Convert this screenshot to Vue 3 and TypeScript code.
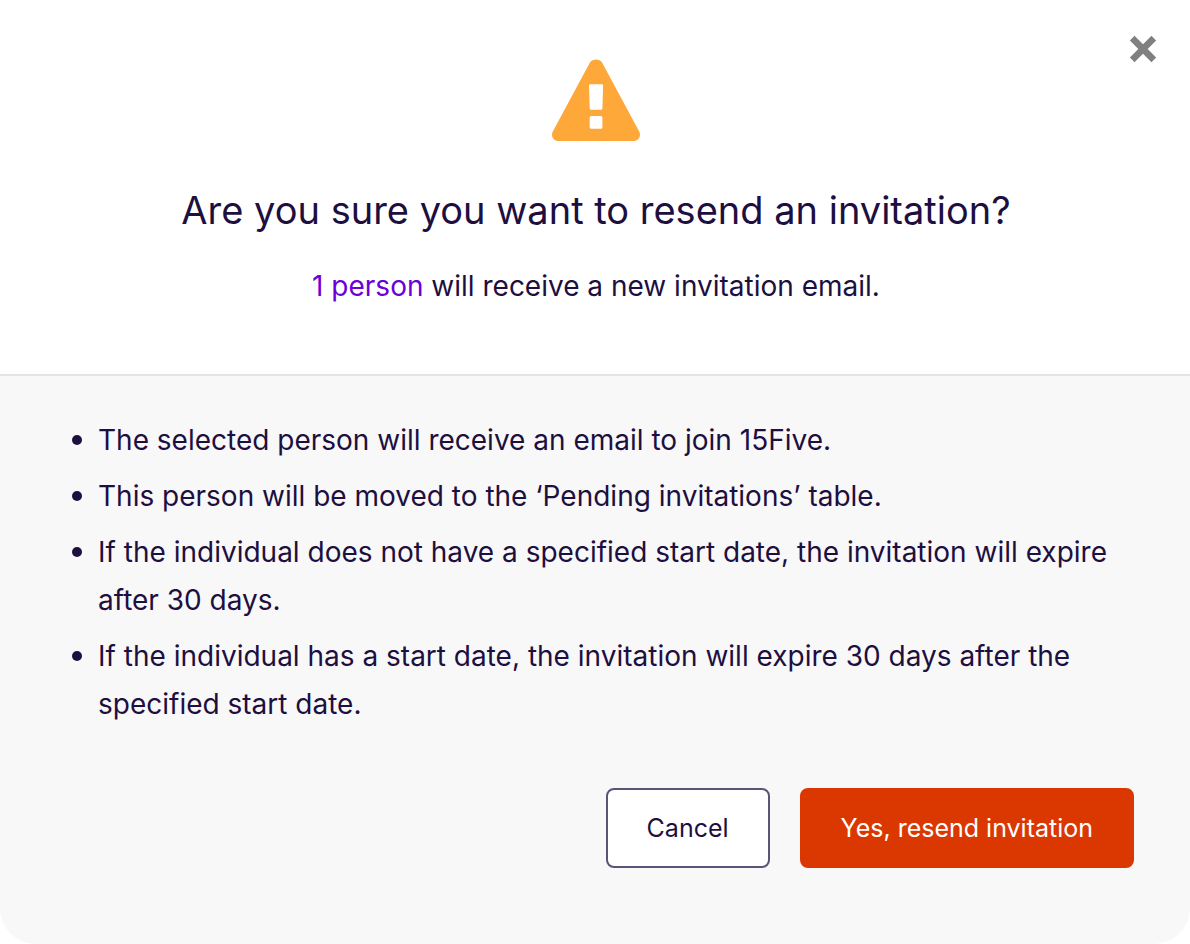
<script setup lang="ts">
import { ref } from 'vue'

const open = ref(true)
const count = ref('1 person')
const notes: string[] = [
  'The selected person will receive an email to join 15Five.',
  'This person will be moved to the ‘Pending invitations’ table.',
  'If the individual does not have a specified start date, the invitation will expire after 30 days.',
  'If the individual has a start date, the invitation will expire 30 days after the specified start date.',
]

function close(): void {
  open.value = false
}
</script>

<template>
  <section v-if="open" class="dialog" role="dialog" aria-modal="true" aria-labelledby="dialog-title">
    <header class="head">
      <button class="close" type="button" aria-label="Close" @click="close">
        <svg viewBox="0 0 28 28" width="28" height="28" aria-hidden="true">
          <path d="M3.2 3.2 24.8 24.8M24.8 3.2 3.2 24.8" fill="none" stroke="#808080" stroke-width="6.6" />
        </svg>
      </button>
      <svg class="warning" viewBox="0 0 88 82" width="88" height="82" aria-hidden="true">
        <path
          fill="#ffa83a"
          fill-rule="evenodd"
          d="M37.8 3.8C40.4-.6 47.6-.6 50.2 3.8L87.2 72.5C89.5 77 86.5 82 81.3 82H6.7C1.5 82-1.5 77 .8 72.5ZM38.3 25.2Q37 25.2 37 26.5L37.7 49.4Q37.8 50.7 39.1 50.7H49Q50.3 50.7 50.4 49.4L51.1 26.5Q51.1 25.2 49.8 25.2ZM39.2 57Q37.7 57 37.7 58.5V68.3Q37.7 69.8 39.2 69.8H48.9Q50.4 69.8 50.4 68.3V58.5Q50.4 57 48.9 57Z"
        />
      </svg>
      <h1 id="dialog-title" class="title">Are you sure you want to resend an invitation?</h1>
      <p class="summary"><span class="count">{{ count }}</span> will receive a new invitation email.</p>
    </header>
    <div class="body">
      <ul class="notes">
        <li v-for="note in notes" :key="note">{{ note }}</li>
      </ul>
      <div class="actions">
        <button class="btn cancel" type="button" @click="close">Cancel</button>
        <button class="btn confirm" type="button" @click="close">Yes, resend invitation</button>
      </div>
    </div>
  </section>
</template>

<style>
body {
  margin: 0;
  background: #fff;
}
</style>

<style scoped>
.dialog {
  font-family: Inter, "Liberation Sans", sans-serif;
  color: #1d0f40;
  border-radius: 0 0 36px 36px;
  overflow: hidden;
}
.head {
  position: relative;
  display: flex;
  flex-direction: column;
  align-items: center;
  padding: 59px 32px 64px 34px;
  border-bottom: 2px solid #e4e4e4;
  text-align: center;
}
.close {
  position: absolute;
  top: 35px;
  right: 33px;
  padding: 0;
  border: 0;
  background: none;
  cursor: pointer;
}
.close svg,
.warning {
  display: block;
}
.title {
  margin: 43px 0 0;
  font-size: 38px;
  font-weight: 400;
  line-height: 52px;
}
.summary {
  margin: 26px 0 0;
  font-size: 28px;
  line-height: 48px;
}
.count {
  color: #6b00d7;
}
.body {
  padding: 40px 56px 76px;
  background: #f8f8f8;
}
.notes {
  display: flex;
  flex-direction: column;
  gap: 8px;
  margin: 0;
  padding: 0 0 0 16px;
  font-size: 28px;
  line-height: 48px;
  list-style: none;
}
.notes li {
  display: flex;
  gap: 16px;
}
.notes li::before {
  content: "";
  flex: none;
  width: 10px;
  height: 10px;
  margin-top: 19px;
  border-radius: 50%;
  background: #1d0f40;
}
.actions {
  display: flex;
  justify-content: flex-end;
  gap: 30px;
  margin-top: 60px;
}
.btn {
  height: 80px;
  padding: 0 39px;
  border: 2px solid #5d5379;
  border-radius: 8px;
  background: #fff;
  color: #1d0f40;
  font-family: inherit;
  font-size: 25px;
  line-height: 32px;
  cursor: pointer;
}
.confirm {
  border-color: #db3700;
  background: #db3700;
  color: #fff;
}
</style>
